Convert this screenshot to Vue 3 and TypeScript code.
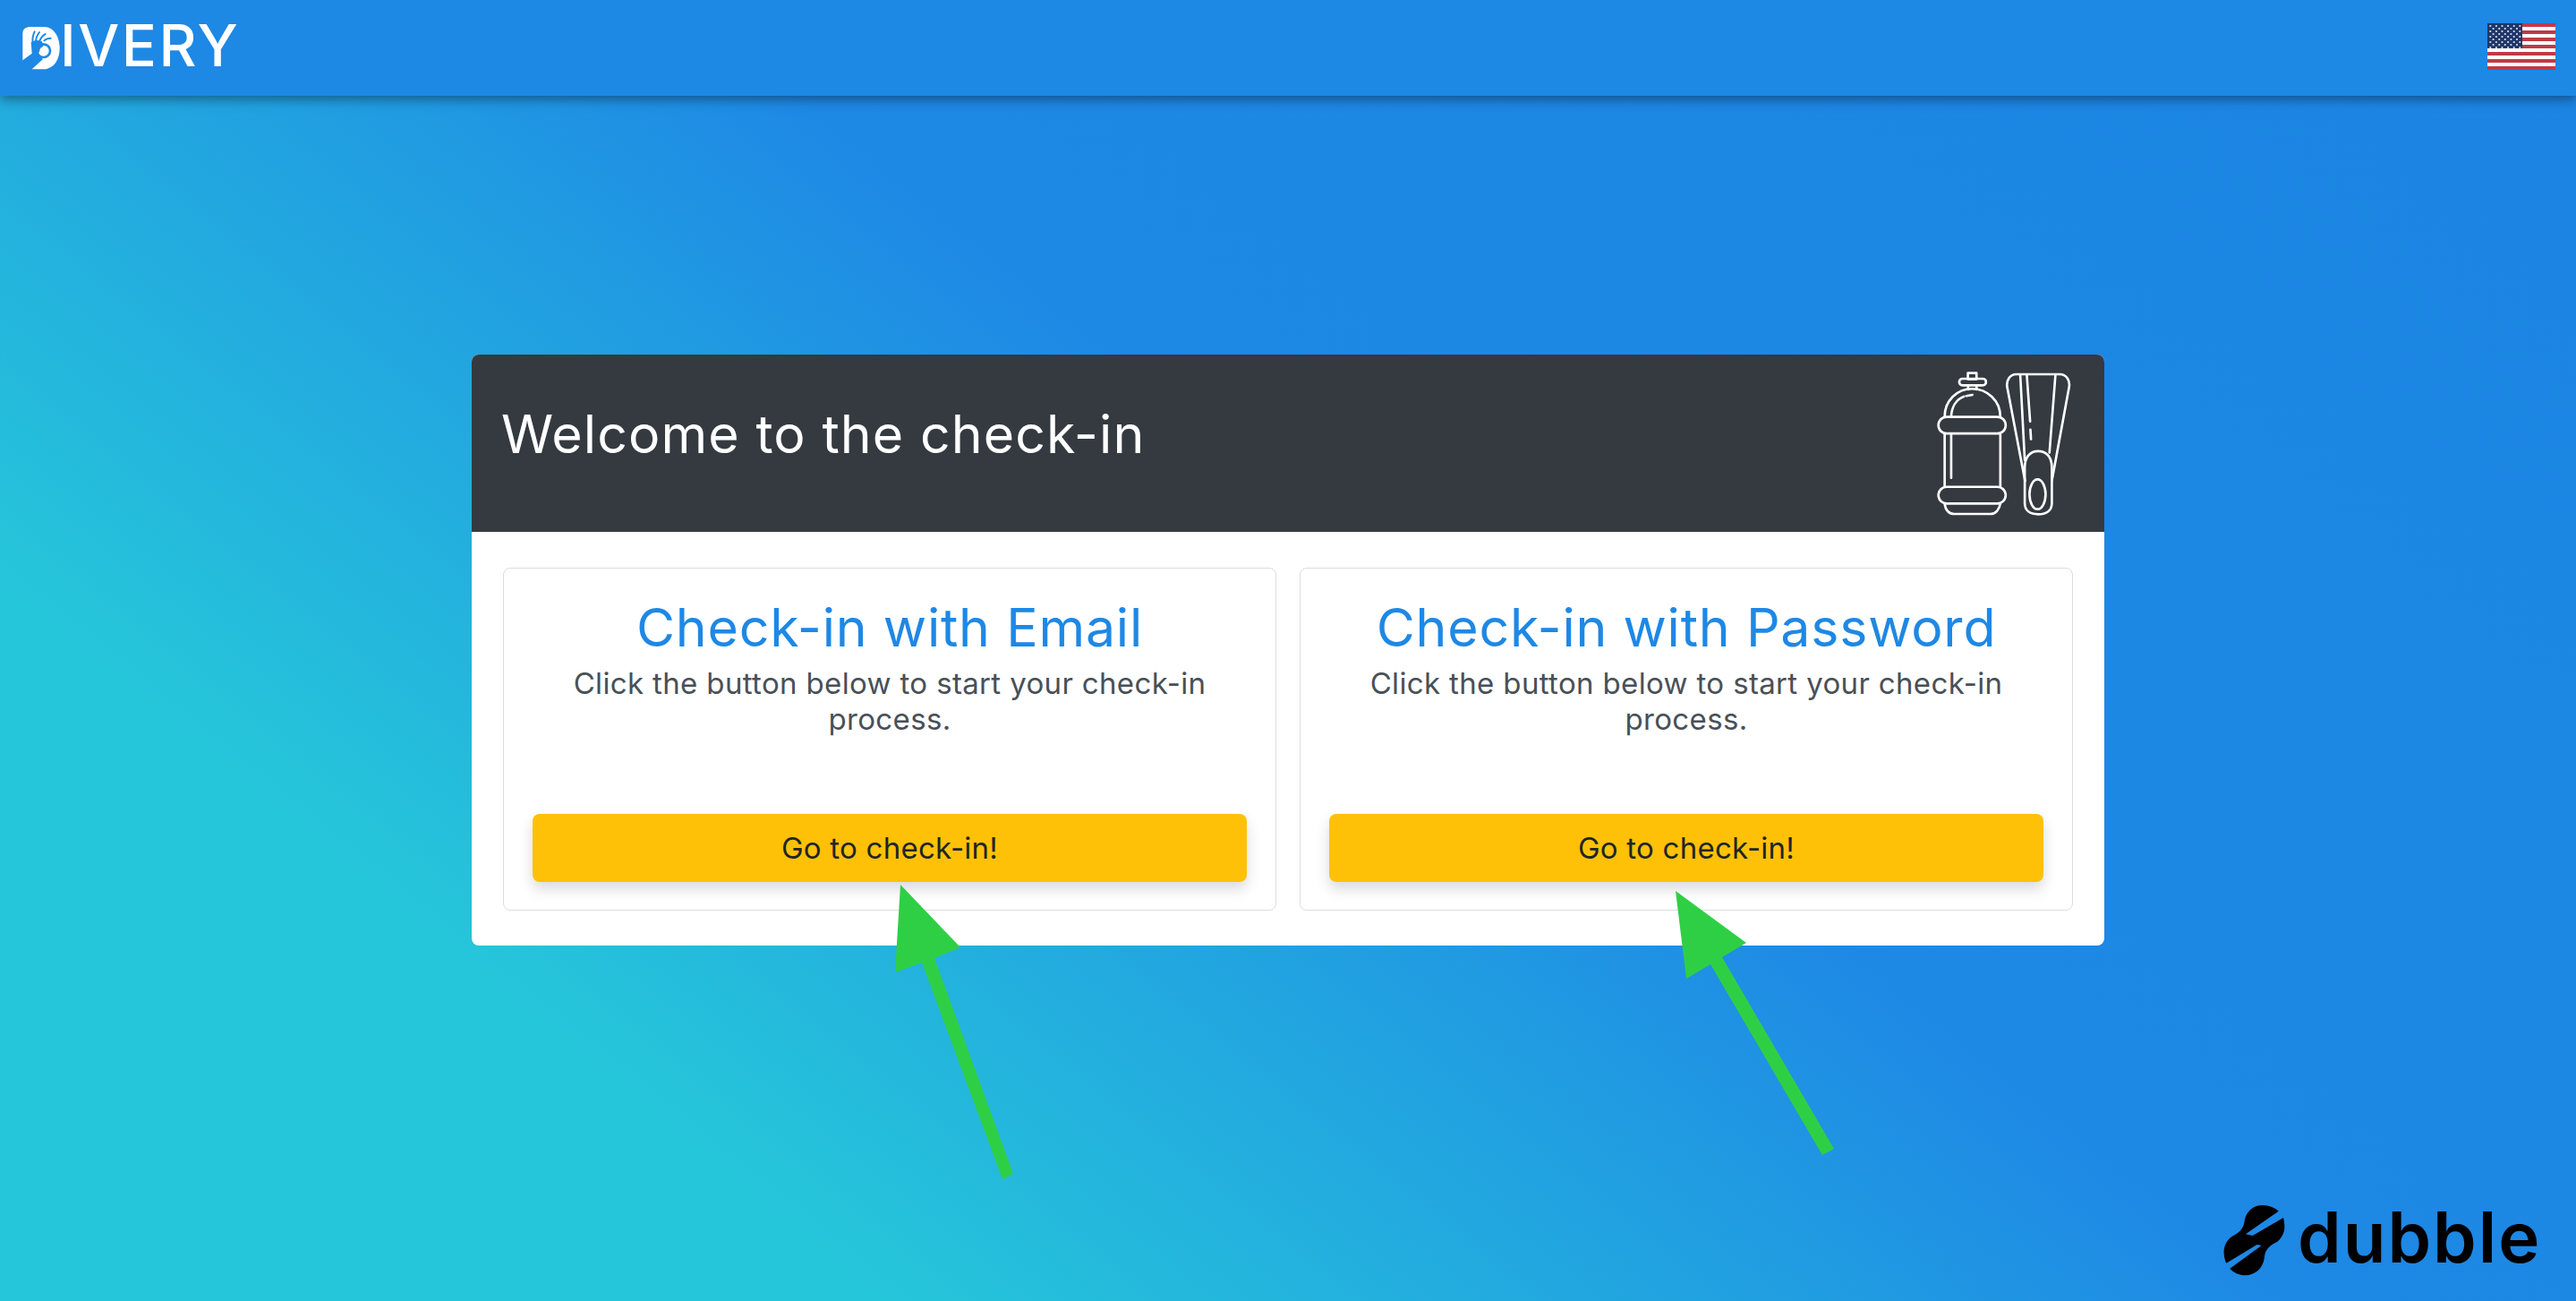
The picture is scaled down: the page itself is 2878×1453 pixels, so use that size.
<script setup lang="ts">
interface Star { x: number; y: number }
const cards = [
  { title: 'Check-in with Email' },
  { title: 'Check-in with Password' },
]
const stripes = Array.from({ length: 7 }, (_, i) => i * 8)
const stars: Star[] = []
for (let r = 0; r < 9; r++) {
  const n = r % 2 ? 5 : 6
  for (let c = 0; c < n; c++) {
    stars.push({ x: (r % 2 ? 6.6 : 3.3) + c * 6.6, y: 3 + r * 3 })
  }
}
</script>

<template>
  <div class="page">
    <header class="nav">
      <div class="brand">
        <svg class="brand-mark" viewBox="0 0 180 180" width="60" height="60" aria-hidden="true">
          <path class="mark-white" d="M16 46C16 31 27 24 42 24H88C122 24 140 60 140 96C140 136 118 166 85 166H36L16 136Z" />
          <path class="mark-hand" d="M14 137L47 113L44 76L60 68L80 72L86 86L66 116L84 132L42 170H14Z" />
          <circle class="mark-ring" cx="86" cy="104" r="22" />
          <circle class="mark-dot" cx="86" cy="104" r="13" />
          <path class="mark-finger" d="M50 80C48 66 50 52 56 40M60 76C60 64 64 52 72 42M72 72C76 62 82 54 92 48M88 70C94 64 102 62 110 62" />
        </svg>
        <span class="brand-text">IVERY</span>
      </div>
      <svg class="flag" viewBox="0 0 76 52" width="76" height="52" aria-hidden="true">
        <rect width="76" height="52" fill="#fff" />
        <rect v-for="y in stripes" :key="y" x="0" :y="y" width="76" height="4" fill="#bf3a44" />
        <rect width="39" height="28" fill="#1f3668" />
        <circle v-for="(s, i) in stars" :key="i" :cx="s.x" :cy="s.y" r="1.1" fill="#dfe3ec" />
      </svg>
    </header>

    <main class="main">
      <section class="panel">
        <div class="panel-head">
          <h1 class="panel-title">Welcome to the check-in</h1>
          <svg class="gear" viewBox="130 70 455 490" width="152" height="163" aria-hidden="true">
            <g fill="none" stroke="#fff" stroke-width="8" stroke-linecap="round" stroke-linejoin="round">
              <rect x="236" y="78" width="29" height="20" />
              <rect x="207" y="97" width="90" height="22" rx="11" />
              <path d="M237 119V133M265 119V133" />
              <path d="M158 225C158 170 200 131 250 131C300 131 345 170 345 225" />
              <path d="M180 222C182 190 198 166 222 157M230 155L251 151" />
              <rect x="137" y="225" width="226" height="56" rx="28" />
              <path d="M158 281V460M345 281V460M180 283V430" />
              <rect x="137" y="460" width="226" height="56" rx="28" />
              <path d="M158 516C160 540 175 551 190 551H312C330 551 342 535 345 516" />
              <path d="M428 440L368 125C364 102 378 82 398 82H545C566 82 580 102 576 125L518 440" />
              <path d="M427 395C427 360 445 340 472 340C500 340 518 360 518 395V515C518 540 500 552 472 552C445 552 427 540 427 515Z" />
              <ellipse cx="470" cy="485" rx="27" ry="50" />
              <path d="M412 85L427 370M434 85L445 240M446 268L448 300M530 85L510 345" />
            </g>
          </svg>
        </div>
        <div class="panel-body">
          <article v-for="card in cards" :key="card.title" class="card">
            <h2 class="card-title">{{ card.title }}</h2>
            <p class="card-text">Click the button below to start your check-in process.</p>
            <button class="card-btn" type="button">Go to check-in!</button>
          </article>
        </div>
      </section>
    </main>

    <svg class="arrows" viewBox="0 0 2878 1453" width="2878" height="1453" aria-hidden="true">
      <polygon points="1006,988 1073,1058 1044,1070 1132,1311 1120,1317 1030,1075 1000,1086" />
      <polygon points="1872,995 1951,1053 1924,1069 2049,1283 2036,1290 1911,1077 1884,1093" />
    </svg>

    <div class="watermark">
      <svg class="peanut" viewBox="0 0 240 270" width="80" height="90" aria-hidden="true">
        <path d="M197 38C180 22 150 14 125 20C100 28 85 50 83 72C80 100 60 113 42 122C22 135 12 158 14 180C15 195 18 205 22 212L125 150L140 153L34 230C50 250 85 258 105 250C135 240 148 215 150 190C152 170 165 155 185 145C205 135 218 110 217 90C217 78 215 68 213 60L110 120L87 115Z" />
      </svg>
      <span class="watermark-text">dubble</span>
    </div>
  </div>
</template>

<style scoped>
.page {
  position: relative;
  height: 100vh;
  overflow: hidden;
  font-family: Inter, "Noto Sans", sans-serif;
  background: linear-gradient(39deg, #26c6da 0%, #26c6da 21%, #1e88e5 55%, #1c85e3 100%);
}
.nav {
  height: 107px;
  display: flex;
  align-items: center;
  justify-content: space-between;
  padding: 0 23px 0 20px;
  background: #1e88e5;
  box-shadow: 0 4px 12px rgba(0, 0, 0, 0.4);
}
.brand {
  display: flex;
  align-items: center;
}
.brand-mark {
  display: block;
  margin-top: -4px;
}
.mark-white { fill: #fff; }
.mark-hand { fill: #1e88e5; }
.mark-ring { fill: none; stroke: #1e88e5; stroke-width: 8; }
.mark-dot { fill: #fff; }
.mark-finger { fill: none; stroke: #1e88e5; stroke-width: 6; stroke-linecap: round; }
.brand-text {
  margin-left: -13px;
  margin-top: -7px;
  color: #fff;
  font-family: Inter, sans-serif;
  font-size: 65px;
  line-height: 1;
  font-weight: 500;
  letter-spacing: 2.5px;
}
.flag {
  display: block;
  margin-top: -3px;
}
.main {
  display: flex;
  justify-content: center;
  padding-top: 289px;
}
.panel {
  width: 1824px;
  background: #fff;
  border-radius: 8px;
  overflow: hidden;
}
.panel-head {
  height: 198px;
  box-sizing: border-box;
  display: flex;
  align-items: center;
  justify-content: space-between;
  padding: 0 36px 0 33px;
  background: #343a40;
}
.panel-title {
  margin: 0 0 19px;
  color: #fff;
  font-size: 59px;
  line-height: 1.2;
  font-weight: 400;
  letter-spacing: 1.1px;
}
.gear {
  display: block;
  margin-top: 1px;
}
.panel-body {
  display: grid;
  grid-template-columns: 864px 864px;
  gap: 26px;
  padding: 40px 35px 39px;
}
.card {
  height: 383px;
  box-sizing: border-box;
  display: flex;
  flex-direction: column;
  align-items: stretch;
  padding: 34px 32px 31px;
  border: 1px solid #dcdcdc;
  border-radius: 8px;
  text-align: center;
}
.card-title {
  margin: 0;
  color: #1e88e5;
  font-size: 59px;
  line-height: 64px;
  font-weight: 400;
  letter-spacing: 0.8px;
}
.card-text {
  margin: 10px 0 0;
  color: #495057;
  font-size: 33px;
  line-height: 40px;
  font-weight: 400;
  letter-spacing: 0.35px;
}
.card-btn {
  margin-top: auto;
  height: 76px;
  border: 0;
  border-radius: 8px;
  background: #ffc107;
  color: #212529;
  font-family: inherit;
  font-size: 33px;
  letter-spacing: 0.25px;
  box-shadow: 0 8px 16px rgba(0, 0, 0, 0.15);
}
.arrows {
  position: absolute;
  left: 0;
  top: 0;
  pointer-events: none;
  fill: #2fcf45;
}
.watermark {
  position: absolute;
  left: 2480px;
  top: 1340px;
  display: flex;
  align-items: center;
}
.peanut {
  display: block;
  fill: #000;
}
.watermark-text {
  margin-left: 7px;
  margin-top: -6px;
  color: #000;
  font-size: 78px;
  line-height: 90px;
  font-weight: 600;
  letter-spacing: 2px;
}
</style>

<style>
html, body {
  margin: 0;
  padding: 0;
}
</style>
